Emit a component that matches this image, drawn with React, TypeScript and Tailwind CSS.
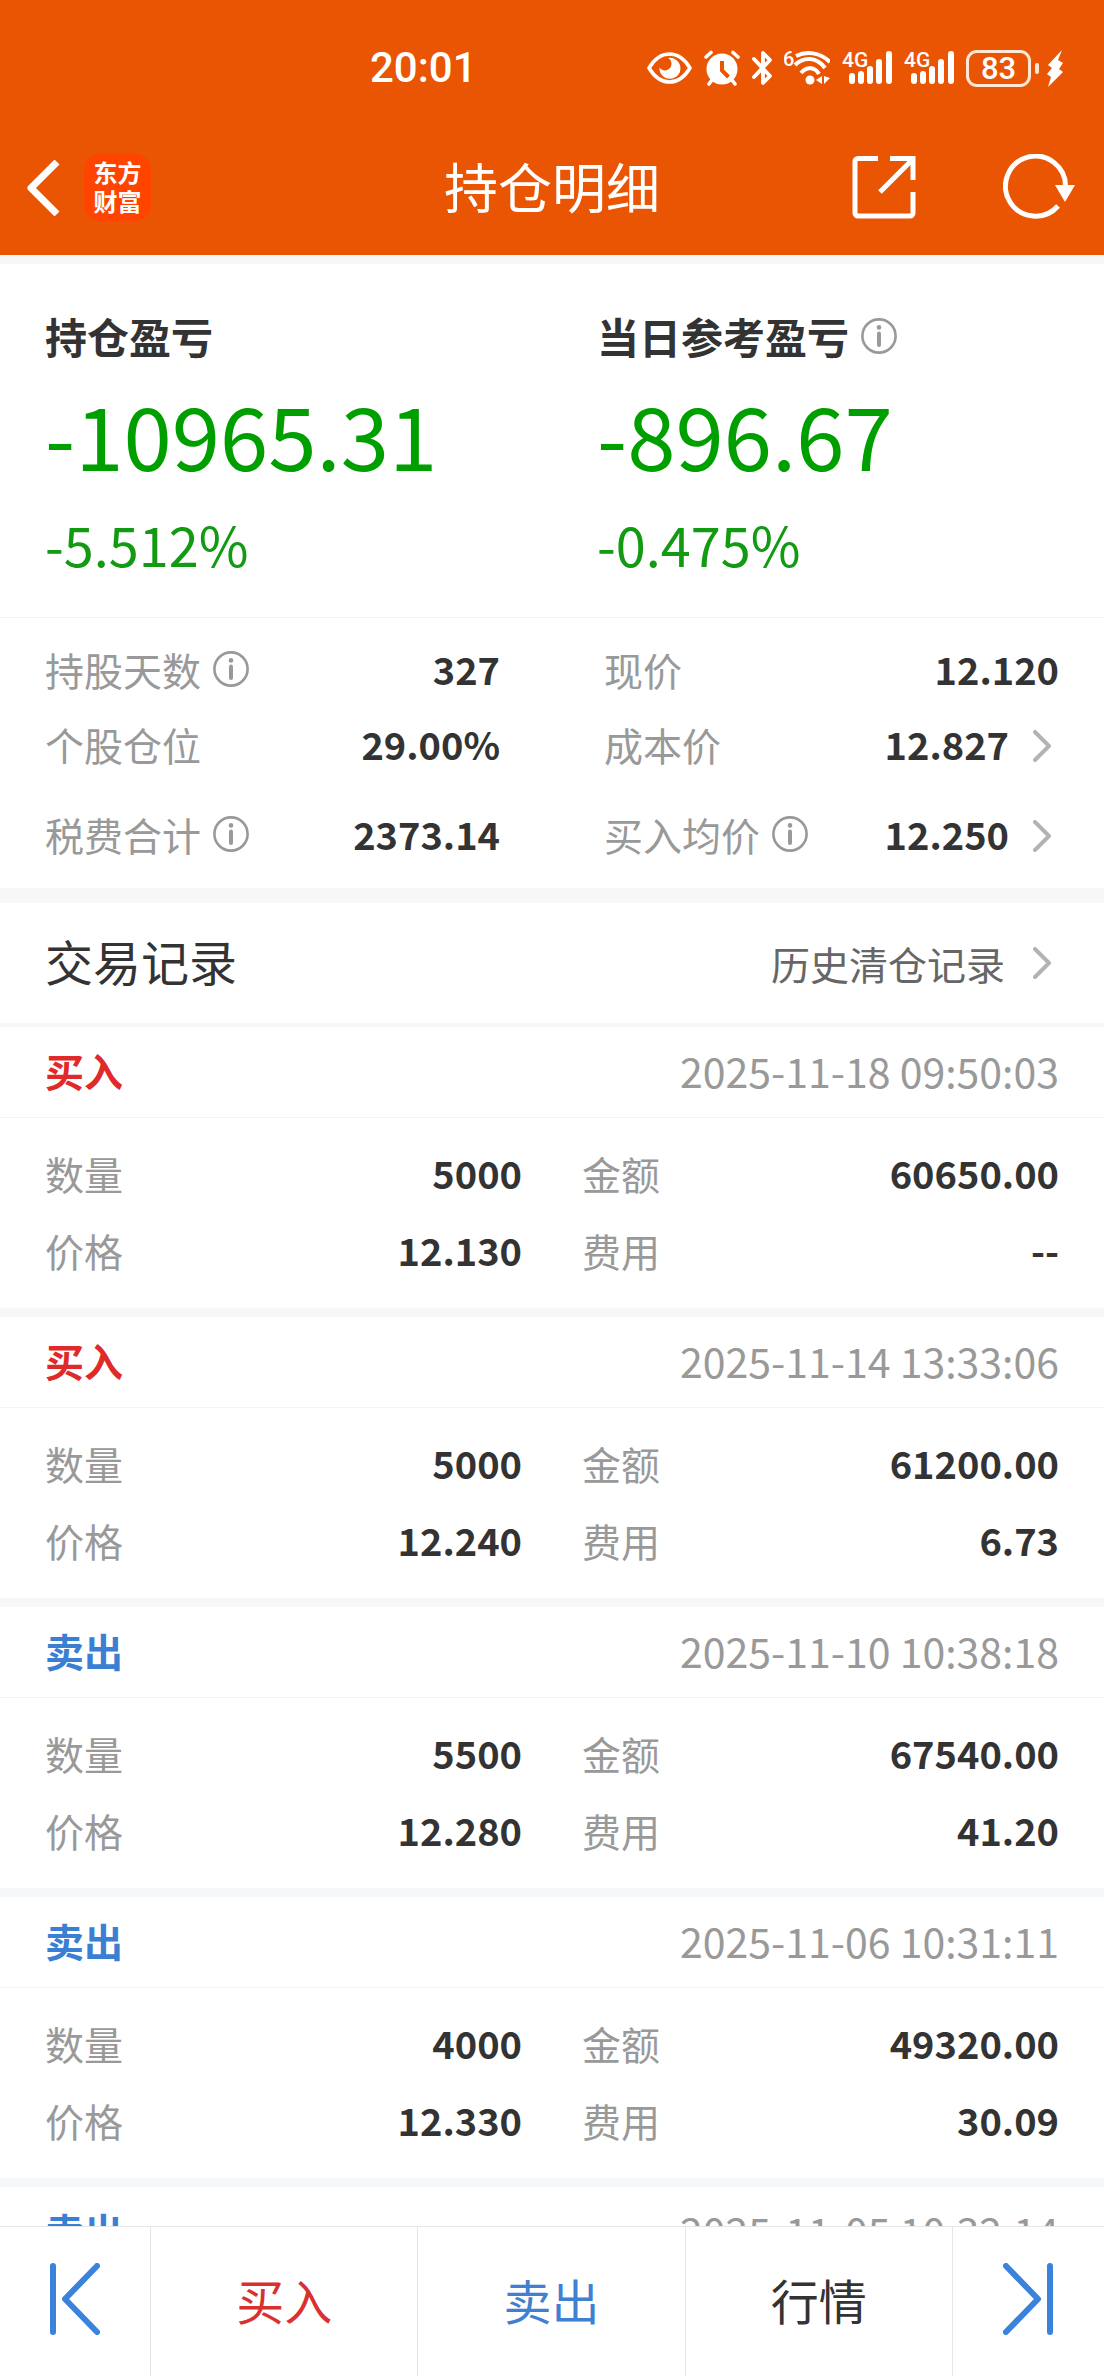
import type { ReactNode } from 'react';

type Stat = {
  label: string;
  value: string;
  info?: boolean;
  link?: boolean;
};

type TradeDetail = {
  quantity: string;
  amount: string;
  price: string;
  fee: string;
};

type Trade = {
  id: number;
  side: 'buy' | 'sell';
  time: string;
  detail?: TradeDetail;
};

const LEFT_STATS: Stat[] = [
  { label: '持股天数', value: '327', info: true },
  { label: '个股仓位', value: '29.00%' },
  { label: '税费合计', value: '2373.14', info: true },
];

const RIGHT_STATS: Stat[] = [
  { label: '现价', value: '12.120' },
  { label: '成本价', value: '12.827', link: true },
  { label: '买入均价', value: '12.250', info: true, link: true },
];

const TRADES: Trade[] = [
  { id: 1, side: 'buy', time: '2025-11-18 09:50:03', detail: { quantity: '5000', amount: '60650.00', price: '12.130', fee: '--' } },
  { id: 2, side: 'buy', time: '2025-11-14 13:33:06', detail: { quantity: '5000', amount: '61200.00', price: '12.240', fee: '6.73' } },
  { id: 3, side: 'sell', time: '2025-11-10 10:38:18', detail: { quantity: '5500', amount: '67540.00', price: '12.280', fee: '41.20' } },
  { id: 4, side: 'sell', time: '2025-11-06 10:31:11', detail: { quantity: '4000', amount: '49320.00', price: '12.330', fee: '30.09' } },
  { id: 5, side: 'sell', time: '2025-11-05 10:32:14' },
];

/* ---------- Icons ---------- */

const InfoIcon = () => (
  <svg width="36" height="36" viewBox="0 0 36 36" fill="none" stroke="#999999" aria-hidden="true">
    <circle cx="18" cy="18" r="16.6" strokeWidth="2.6" />
    <circle cx="18" cy="9.4" r="2.3" fill="#999999" stroke="none" />
    <path d="M18 15.5v11.5" strokeWidth="4" strokeLinecap="round" />
  </svg>
);

const ChevronIcon = () => (
  <svg width="18" height="32" viewBox="0 0 18 32" fill="none" aria-hidden="true">
    <path d="M2 2l14 14L2 30" stroke="#b3b3b3" strokeWidth="4" strokeLinecap="round" strokeLinejoin="round" />
  </svg>
);

const SignalIcon = () => (
  <svg width="50" height="52" viewBox="0 -8 50 52" fill="#fff" aria-hidden="true">
    <text x="0" y="17" fontSize="21" fontWeight="500" fontFamily="Roboto, sans-serif">4G</text>
    <rect x="7" y="23" width="6" height="11" rx="3" />
    <rect x="16" y="21" width="6" height="13" rx="3" />
    <rect x="25" y="16" width="6" height="18" rx="3" />
    <rect x="34" y="9" width="6" height="25" rx="3" />
    <rect x="44" y="1" width="6" height="33" rx="3" />
  </svg>
);

const StatusIcons = () => (
  <div className="flex items-center gap-3">
    {/* Eye comfort */}
    <svg width="45" height="36" viewBox="0 0 45 36" fill="none" aria-hidden="true">
      <path d="M2 18C8 8 15 4 22.5 4S37 8 43 18C37 28 30 32 22.5 32S8 28 2 18z" stroke="#fff" strokeWidth="3.6" strokeLinejoin="round" />
      <path d="M21 8A10.5 10.5 0 1 1 12.5 17.5A6 6 0 0 0 21 19.5A6.5 6.5 0 0 0 21 8z" fill="#fff" />
    </svg>
    {/* Alarm */}
    <svg width="36" height="36" viewBox="0 0 36 36" fill="none" stroke="#fff" strokeLinecap="round" aria-hidden="true">
      <circle cx="18" cy="19" r="15.5" fill="#fff" stroke="none" />
      <path d="M2 7l5-4.5M34 7l-5-4.5M8 30l-3 4M28 30l3 4" strokeWidth="3.6" />
      <path d="M18 11v9.5l6.5 6.5" stroke="#ea5504" strokeWidth="4" strokeLinecap="butt" />
    </svg>
    {/* Bluetooth */}
    <svg width="20" height="36" viewBox="0 0 20 36" fill="none" aria-hidden="true">
      <path d="M2 9l16 17-7 7V3l7 7L2 27" stroke="#fff" strokeWidth="3.8" strokeLinecap="round" strokeLinejoin="round" />
    </svg>
    {/* Wi-Fi 6 */}
    <svg width="46" height="52" viewBox="0 -8 46 52" fill="none" stroke="#fff" aria-hidden="true">
      <text x="-1" y="16" fontSize="20" fontWeight="500" fontFamily="Roboto, sans-serif" fill="#fff" stroke="none">6</text>
      <path d="M12 6C22 1 36 2 46 12M11 15C20 6 33 7 41 18M17 23C23 16 31 17 35 24" strokeWidth="4" />
      <circle cx="26" cy="30" r="4.5" fill="#fff" stroke="none" />
      <path d="M38 26v8l-6-4zM40 26v8l6-6z" fill="#fff" stroke="none" />
    </svg>
    <SignalIcon />
    <SignalIcon />
    <div className="flex items-center gap-2">
      <div className="flex items-center gap-1">
        <span className="flex h-[37px] w-[65px] items-center justify-center rounded-[11px] border-3 border-[#ffe9d6] font-[Roboto,sans-serif] text-[31px] leading-[31px] font-medium">
          83
        </span>
        <span className="h-[11px] w-1 rounded-sm bg-[#ffe9d6]" />
      </div>
      <svg width="16" height="37" viewBox="0 0 16 37" fill="#fff" aria-hidden="true">
        <path d="M15 0L1 15l4 3-5 6 4 3L1 37l15-15-4-3 4-6-5-3z" />
      </svg>
    </div>
  </div>
);

/* ---------- Header ---------- */

const Header = () => (
  <header className="bg-[#ea5504] text-white">
    <div className="flex h-[136px] items-center justify-between pr-[41px] pl-[370px]">
      <span className="font-[Roboto,sans-serif] text-[42px] leading-[60px] font-medium">20:01</span>
      <StatusIcons />
    </div>

    <div className="grid h-[119px] grid-cols-[1fr_auto_1fr] items-start pt-[18px]">
      <div className="flex items-center gap-6 pl-[26px]">
        <button type="button" aria-label="返回">
          <svg width="34" height="56" viewBox="0 0 34 56" fill="none" aria-hidden="true">
            <path d="M31 2L5 28l26 26" stroke="#fff" strokeWidth="7" strokeLinejoin="round" />
          </svg>
        </button>
        <span className="flex size-[67px] items-center justify-center rounded-2xl bg-[#ff4400] pb-1 text-center text-[24px] leading-[29px] font-bold">
          东方
          <br />
          财富
        </span>
      </div>
      <h1 className="text-[54px] leading-[64px]">持仓明细</h1>
      <div className="flex items-center justify-end gap-[87px] pr-[29px]">
        <button type="button" aria-label="分享">
          <svg width="64" height="66" viewBox="0 0 64 66" fill="none" stroke="#fff" strokeWidth="5" aria-hidden="true">
            <path d="M26 4.5H6a3 3 0 0 0-3 3V59a3 3 0 0 0 3 3h52a3 3 0 0 0 3-3V38" />
            <path d="M38 4.5h23V26M60 6L28 38" />
          </svg>
        </button>
        <button type="button" aria-label="刷新">
          <svg width="72" height="66" viewBox="0 0 72 66" fill="none" aria-hidden="true">
            <path d="M55 52A30 30 0 1 1 62.5 33" stroke="#fff" strokeWidth="5" />
            <path d="M52 31h20L62 48z" fill="#fff" />
          </svg>
        </button>
      </div>
    </div>
  </header>
);

/* ---------- Summary ---------- */

type ProfitBlockProps = {
  title: string;
  amount: string;
  percent: string;
  info?: boolean;
};

const ProfitBlock = ({ title, amount, percent, info }: ProfitBlockProps) => (
  <div className="pl-[45px]">
    <div className="flex items-center gap-3">
      <h2 className="text-[42px] leading-[60px] font-bold text-[#333333]">{title}</h2>
      {info && <InfoIcon />}
    </div>
    <p className="mt-[14px] text-[87px] leading-[106px] text-[#009f00]">{amount}</p>
    <p className="mt-[22px] text-[54px] leading-[72px] text-[#129a12]">{percent}</p>
  </div>
);

const StatRow = ({ stat }: { stat: Stat }) => (
  <div className="flex h-[60px] items-center justify-between">
    <dt className="flex items-center gap-3 pb-1 text-[39px] text-[#999999]">
      {stat.label}
      {stat.info && <InfoIcon />}
    </dt>
    <dd className="flex items-center gap-6 pb-1 text-[38px] font-bold text-[#333333]">
      {stat.value}
      {stat.link && (
        <button type="button" aria-label={stat.label} className="mt-1 mr-2">
          <ChevronIcon />
        </button>
      )}
    </dd>
  </div>
);

const StatList = ({ stats }: { stats: Stat[] }) => (
  <dl className="leading-[56px]">
    {stats.map((stat, i) => (
      <div key={stat.label} className={i === 0 ? '' : i === 1 ? 'mt-[15px]' : 'mt-[30px]'}>
        <StatRow stat={stat} />
      </div>
    ))}
  </dl>
);

/* ---------- Trades ---------- */

const Field = ({ label, value }: { label: string; value: string }) => (
  <div className="flex h-[77px] items-center justify-between pb-1">
    <dt className="text-[39px] text-[#999999]">{label}</dt>
    <dd className="text-[38px] font-bold text-[#333333]">{value}</dd>
  </div>
);

const TradeCard = ({ trade }: { trade: Trade }) => (
  <article className="border-b-9 border-[#f6f7f9] leading-[60px]">
    <div className="flex h-[91px] items-center justify-between border-b border-[#f3f4f6] px-[45px] pb-1">
      <h3 className={`text-[39px] font-bold ${trade.side === 'buy' ? 'text-[#e02a2a]' : 'text-[#3b7fd4]'}`}>
        {trade.side === 'buy' ? '买入' : '卖出'}
      </h3>
      <time className="text-[41px] text-[#999999]">{trade.time}</time>
    </div>
    {trade.detail && (
      <dl className="grid grid-cols-2 gap-x-[60px] px-[45px] py-[18px]">
        <Field label="数量" value={trade.detail.quantity} />
        <Field label="金额" value={trade.detail.amount} />
        <Field label="价格" value={trade.detail.price} />
        <Field label="费用" value={trade.detail.fee} />
      </dl>
    )}
  </article>
);

/* ---------- Bottom bar ---------- */

const NavButton = ({ className, label, children }: { className: string; label?: string; children: ReactNode }) => (
  <button type="button" aria-label={label} className={`flex items-center justify-center pb-[5px] ${className}`}>
    {children}
  </button>
);

const BottomBar = () => (
  <nav className="flex h-[150px] shrink-0 divide-x divide-[#e6e6e6] border-t border-[#e6e6e6] bg-white text-[48px] leading-[60px]">
    <NavButton className="w-[151px]" label="上一个">
      <svg width="50" height="72" viewBox="0 0 50 72" fill="none" stroke="#3b82dc" strokeWidth="6" strokeLinecap="round" strokeLinejoin="round" aria-hidden="true">
        <path d="M3 3v66M47 3L15 36l32 33" />
      </svg>
    </NavButton>
    <NavButton className="flex-1 text-[#d93030]">买入</NavButton>
    <NavButton className="flex-1 text-[#3f80d0]">卖出</NavButton>
    <NavButton className="flex-1 text-[#333333]">行情</NavButton>
    <NavButton className="w-[151px]" label="下一个">
      <svg width="50" height="72" viewBox="0 0 50 72" fill="none" stroke="#3b82dc" strokeWidth="6" strokeLinecap="round" strokeLinejoin="round" aria-hidden="true">
        <path d="M47 3v66M3 3l32 33L3 69" />
      </svg>
    </NavButton>
  </nav>
);

export default function App() {
  return (
    <div className="flex h-screen flex-col bg-white font-['Noto_Sans_CJK_SC',sans-serif]">
      <Header />

      <main className="min-h-0 flex-1 overflow-y-auto border-t-9 border-[#f6f7f9] [scrollbar-width:none]">
        {/* Profit and loss */}
        <section className="grid grid-cols-2 border-b border-[#f3f4f6] pt-[42px] pb-[37px]">
          <ProfitBlock title="持仓盈亏" amount="-10965.31" percent="-5.512%" />
          <ProfitBlock title="当日参考盈亏" amount="-896.67" percent="-0.475%" info />
        </section>

        {/* Position details */}
        <section className="grid grid-cols-2 gap-x-[104px] border-b-15 border-[#f6f7f9] px-[45px] pt-[23px] pb-[22px]">
          <StatList stats={LEFT_STATS} />
          <StatList stats={RIGHT_STATS} />
        </section>

        {/* Trade records */}
        <section>
          <div className="flex h-[124px] items-center justify-between border-b-4 border-[#f6f7f9] px-[45px]">
            <h2 className="pb-[6px] text-[48px] leading-[60px] text-[#333333]">交易记录</h2>
            <a href="#history" className="mr-2 flex items-center gap-7 text-[39px] leading-[60px] text-[#666666]">
              历史清仓记录
              <ChevronIcon />
            </a>
          </div>
          {TRADES.map(trade => (
            <TradeCard key={trade.id} trade={trade} />
          ))}
        </section>
      </main>

      <BottomBar />
    </div>
  );
}
